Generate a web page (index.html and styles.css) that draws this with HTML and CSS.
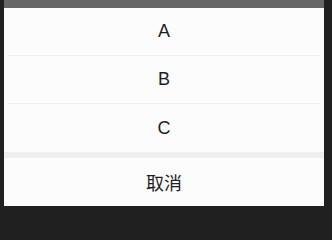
FILE: index.html
```html
<!DOCTYPE html>
<html lang="zh">
<head>
<meta charset="utf-8">
<title>ActionSheet</title>
<link rel="stylesheet" href="styles.css">
</head>
<body>
<div class="screen">
  <div class="mask"></div>
  <div class="sheet">
    <div class="menu">
      <div class="item">A</div>
      <div class="item">B</div>
      <div class="item">C</div>
    </div>
    <div class="gap"></div>
    <div class="cancel">取消</div>
  </div>
</div>
</body>
</html>
```
FILE: styles.css
```css
html, body {
  margin: 0;
  padding: 0;
  background: #202020;
}
body {
  width: 332px;
  height: 213px;
  overflow: hidden;
  font-family: "Liberation Sans", "Noto Sans CJK SC", sans-serif;
  color: #1f1f1f;
}
.screen {
  width: 320px;
  margin-left: 4px;
}
.mask {
  height: 8px;
  background: #666666;
}
.sheet {
  background: #fcfcfc;
}
.menu {
  display: flex;
  flex-direction: column;
}
.item {
  height: 48px;
  box-sizing: border-box;
  margin: 0 4px;
  display: flex;
  align-items: center;
  justify-content: center;
  font-size: 18px;
  border-bottom: 1px solid #eeeeee;
}
.item:last-child {
  border-bottom: none;
}
.gap {
  height: 6px;
  background: #efefef;
}
.cancel {
  height: 48px;
  display: flex;
  align-items: center;
  justify-content: center;
  font-size: 18px;
}
```
